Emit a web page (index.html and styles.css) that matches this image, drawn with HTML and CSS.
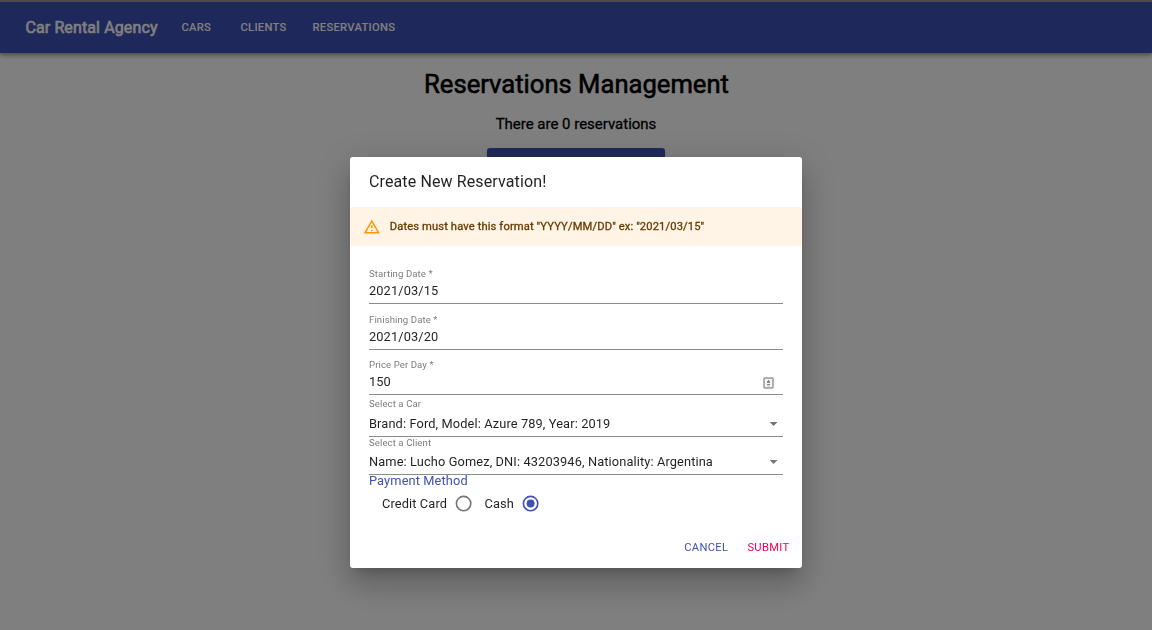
FILE: index.html
```html
<!DOCTYPE html>
<html lang="en">
<head>
<meta charset="utf-8">
<title>Car Rental Agency</title>
<link rel="stylesheet" href="styles.css">
</head>
<body>
<header class="appbar">
  <span class="brand">Car Rental Agency</span>
  <nav class="nav"><a class="nav-cars">Cars</a><a class="nav-clients">Clients</a><a>Reservations</a></nav>
</header>
<main class="page">
  <h1>Reservations Management</h1>
  <h3>There are 0 reservations</h3>
  <div class="create-button"></div>
</main>
<div class="backdrop">
  <section class="dialog">
    <h2 class="dialog-title">Create New Reservation!</h2>
    <div class="alert">
      <svg class="alert-icon" viewBox="0 0 24 24"><path d="M12 5.99L19.53 19H4.47L12 5.99M12 2L1 21h22L12 2zm1 14h-2v2h2v-2zm0-6h-2v4h2v-4z"/></svg>
      <span>Dates must have this format "YYYY/MM/DD" ex: "2021/03/15"</span>
    </div>
    <form class="form">
      <div class="field start"><label>Starting Date *</label><div class="value">2021/03/15</div></div>
      <div class="field finish"><label>Finishing Date *</label><div class="value">2021/03/20</div></div>
      <div class="field price"><label>Price Per Day *</label><div class="value">150
        <svg class="autofill" viewBox="0 0 11 12"><rect x="1" y="1" width="9" height="10" rx=".7" fill="#f4f4f4" stroke="#999" stroke-width="1.5"/><path d="M5 3h1v1h1v2H4V4h1zM4 7h3v1H4zM4 8.7h3v.6H4z" fill="#888"/></svg></div></div>
      <div class="field car"><label>Select a Car</label><div class="value">Brand: Ford, Model: Azure 789, Year: 2019
        <svg class="arrow" viewBox="0 0 24 24"><path d="M7 10l5 5 5-5z"/></svg></div></div>
      <div class="field client"><label>Select a Client</label><div class="value">Name: Lucho Gomez, DNI: 43203946, Nationality: Argentina
        <svg class="arrow" viewBox="0 0 24 24"><path d="M7 10l5 5 5-5z"/></svg></div></div>
      <div class="legend">Payment Method</div>
      <div class="radios">
        <span>Credit Card</span>
        <svg class="radio" viewBox="0 0 24 24"><circle cx="12" cy="12" r="9"/></svg>
        <span>Cash</span>
        <svg class="radio checked" viewBox="0 0 24 24"><circle cx="12" cy="12" r="9"/><circle class="dot" cx="12" cy="12" r="5"/></svg>
      </div>
    </form>
    <footer class="actions"><span class="cancel">Cancel</span><span class="submit">Submit</span></footer>
  </section>
</div>
</body>
</html>
```
FILE: styles.css
```css
* { box-sizing: border-box; }
body {
  margin: 0;
  height: 630px;
  overflow: hidden;
  background: #fff;
  color: #000;
  font: 400 12.8px/1.2 Roboto, "Liberation Sans", sans-serif;
}
.appbar {
  display: flex;
  align-items: center;
  height: 53px;
  padding: 1px 25px 0;
  background: #3f51b5;
  border-top: 2px solid #9a9a88;
  box-shadow: 0 2px 3px rgba(0,0,0,.2), 0 3px 4px rgba(0,0,0,.14), 0 1px 8px rgba(0,0,0,.12);
  color: #fff;
}
.brand {
  width: 156.5px;
  padding-left: .4px;
  font-size: 16px;
  letter-spacing: .12px;
  -webkit-text-stroke: .6px;
  white-space: nowrap;
}
.nav {
  display: flex;
  font-size: 11.2px;
  font-weight: 500;
  letter-spacing: .28px;
  text-transform: uppercase;
}
.nav-cars { width: 59px; }
.nav-clients { width: 72px; }
.page { display: flex; flex-direction: column; align-items: center; }
h1, h3 { margin: 0; font-weight: 400; }
h1 {
  padding: 16px 0 0 1px;
  font-size: 25.6px;
  line-height: 30px;
  -webkit-text-stroke: .6px;
}
h3 {
  padding-top: 16px;
  font-size: 14.98px;
  line-height: 18px;
  -webkit-text-stroke: .3px;
}
.create-button {
  width: 178px;
  height: 29px;
  margin-top: 15px;
  border-radius: 3px;
  background: #3f51b5;
  box-shadow: 0 2px 3px rgba(0,0,0,.2);
}
.backdrop {
  position: fixed;
  inset: 0;
  padding: 157px 350px 0;
  background: rgba(0,0,0,.5);
}
.dialog {
  height: 411px;
  border-radius: 3px;
  background: #fff;
  box-shadow: 0 9px 12px -6px rgba(0,0,0,.2), 0 19px 30px 2px rgba(0,0,0,.14), 0 7px 37px 6px rgba(0,0,0,.12);
  color: rgba(0,0,0,.87);
}
.dialog-title {
  height: 50px;
  margin: 0;
  padding-left: 19px;
  font-size: 16px;
  font-weight: 400;
  line-height: 50px;
  letter-spacing: .12px;
}
.alert {
  display: flex;
  align-items: center;
  height: 39px;
  padding-left: 13px;
  border-radius: 3px;
  background: #fff4e5;
  color: #663c00;
  font-size: 11.2px;
  letter-spacing: .12px;
  -webkit-text-stroke: .3px;
}
.alert-icon {
  width: 17.6px;
  height: 17.6px;
  margin-right: 9.2px;
  fill: #ff9800;
  stroke: none;
}
.form { height: 280px; padding: 19px 19px 0; }
.field {
  display: flex;
  flex-direction: column;
  justify-content: space-between;
  border-bottom: 1px solid #8c8c8c;
  letter-spacing: .12px;
}
.field label {
  color: rgba(0,0,0,.54);
  font-size: 9.6px;
  line-height: 12px;
  letter-spacing: .09px;
}
.value {
  display: flex;
  justify-content: space-between;
  align-items: center;
  height: 16px;
  line-height: 16px;
  margin-bottom: 4px;
}
.start { height: 39px; padding-top: 3px; }
.finish { height: 46px; padding-top: 10px; }
.price { height: 45px; padding-top: 9px; }
.car { height: 42px; padding-top: 3px; }
.client { height: 38px; }
.autofill { width: 11px; height: 12px; margin: 2px 9px 0 0; }
.arrow { width: 19.2px; height: 19.2px; fill: #757575; }
.legend {
  height: 16px;
  color: #3f51b5;
  line-height: 12px;
  letter-spacing: .12px;
}
.radios {
  display: flex;
  align-items: center;
  height: 25px;
  padding-left: 13px;
  letter-spacing: .12px;
}
.radio {
  width: 19.2px;
  height: 19.2px;
  margin: 0 11.2px 0 7px;
  fill: none;
  stroke: #757575;
  stroke-width: 2;
}
.checked { stroke: #3f51b5; }
.dot { fill: #3f51b5; stroke: none; }
.actions {
  display: flex;
  justify-content: flex-end;
  gap: 19px;
  padding: 15px 12.5px 0 0;
  font-size: 11.2px;
  letter-spacing: .32px;
  text-transform: uppercase;
}
.cancel { color: #3f51b5; }
.submit { color: #f50057; }
```
